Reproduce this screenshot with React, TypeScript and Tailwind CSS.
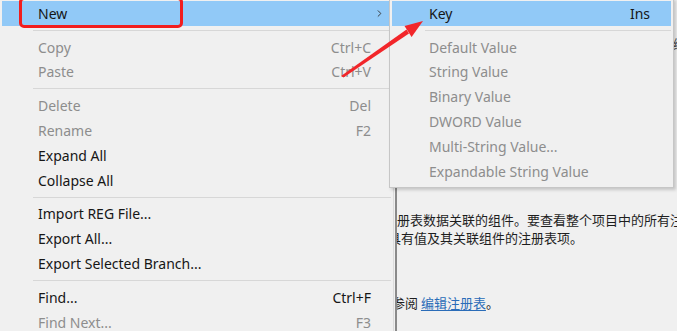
import { ChevronRight } from 'lucide-react'

type Item = { label: string; shortcut?: string; disabled?: boolean } | 'sep'

const mainItems: Item[] = [
  'sep',
  { label: 'Copy', shortcut: 'Ctrl+C', disabled: true },
  { label: 'Paste', shortcut: 'Ctrl+V', disabled: true },
  'sep',
  { label: 'Delete', shortcut: 'Del', disabled: true },
  { label: 'Rename', shortcut: 'F2', disabled: true },
  { label: 'Expand All' },
  { label: 'Collapse All' },
  'sep',
  { label: 'Import REG File...' },
  { label: 'Export All...' },
  { label: 'Export Selected Branch...' },
  'sep',
  { label: 'Find...', shortcut: 'Ctrl+F' },
  { label: 'Find Next...', shortcut: 'F3', disabled: true },
]

const subItems = [
  'Default Value',
  'String Value',
  'Binary Value',
  'DWORD Value',
  'Multi-String Value...',
  'Expandable String Value',
]

function Sep() {
  return (
    <div className="flex h-[9px] items-center pl-[31px]">
      <div className="h-px w-full bg-[#d7d7d7]" />
    </div>
  )
}

function Row({ label, shortcut, disabled }: { label: string; shortcut?: string; disabled?: boolean }) {
  return (
    <div className={`flex h-[24.8px] items-center justify-between pl-[36px] pr-[20px] ${disabled ? 'text-[#8d8d8d]' : 'text-[#161616]'}`}>
      <span>{label}</span>
      {shortcut && <span>{shortcut}</span>}
    </div>
  )
}

export default function App() {
  return (
    <div className="relative h-[331px] w-[677px] overflow-hidden bg-[#f0f0f0] text-[14px] [font-family:'Noto_Sans',sans-serif]">
      {/* pane behind the menus */}
      <div className="flex h-full">
        <div className="w-[395px] shrink-0" />
        <div className="flex flex-1 flex-col overflow-hidden whitespace-nowrap border-l-2 border-[#8a8a8a] pt-[37px] text-[13px] leading-[18px] text-[#1e1e1e] [font-family:'Noto_Sans_CJK_SC',sans-serif]">
          <div className="ml-[276px] h-[14px] leading-[14px] text-[#444]">编辑</div>
          <div className="mt-[160px]">册表数据关联的组件。要查看整个项目中的所有注册表项</div>
          <div className="ml-[-9px]">具有值及其关联组件的注册表项。</div>
          <div className="ml-[-5px] mt-[47px]">
            参阅 <span className="text-[#2a6cb8] underline underline-offset-2">编辑注册表</span>。
          </div>
        </div>
      </div>

      {/* main context menu */}
      <div className="absolute left-0 top-0 w-[394px] border-r border-[#dcdcdc] bg-[#f0f0f0] px-[2px] pt-[1px]">
        <div className="flex h-[24.8px] items-center justify-between bg-[#91c9f7] pl-[36px] pr-[6px] text-[#161616]">
          <span>New</span>
          <ChevronRight className="h-[11px] w-[11px] text-[#333]" strokeWidth={2} />
        </div>
        {mainItems.map((it, i) => (it === 'sep' ? <Sep key={i} /> : <Row key={i} {...it} />))}
      </div>

      {/* New submenu */}
      <div className="absolute left-[389px] top-[-2px] w-[285px] border border-[#c6c6c6] bg-[#f0f0f0] px-[2px] pb-[3px] pt-[2px] shadow-[2px_2px_3px_rgba(0,0,0,0.18)]">
        <div className="flex h-[24.8px] items-center justify-between bg-[#91c9f7] pl-[37px] pr-[21px] text-[#161616]">
          <span>Key</span>
          <span>Ins</span>
        </div>
        <div className="flex h-[9px] items-center pl-[33px]">
          <div className="h-px w-full bg-[#d7d7d7]" />
        </div>
        {subItems.map((s) => (
          <div key={s} className="flex h-[24.8px] items-center pl-[37px] text-[#8d8d8d]">
            {s}
          </div>
        ))}
      </div>

      {/* annotation */}
      <div className="absolute left-[19px] top-[-3px] h-[31px] w-[164px] rounded-[5px] border-[3px] border-[#f21d1d]" />
      <svg className="pointer-events-none absolute left-0 top-0" width="677" height="331" viewBox="0 0 677 331">
        <polygon points="341,76 343.5,77.5 409,33.5 406.5,29.5" fill="#f2262a" />
        <polygon points="423,21 411.6,37 404.5,26" fill="#f2262a" />
      </svg>
    </div>
  )
}
